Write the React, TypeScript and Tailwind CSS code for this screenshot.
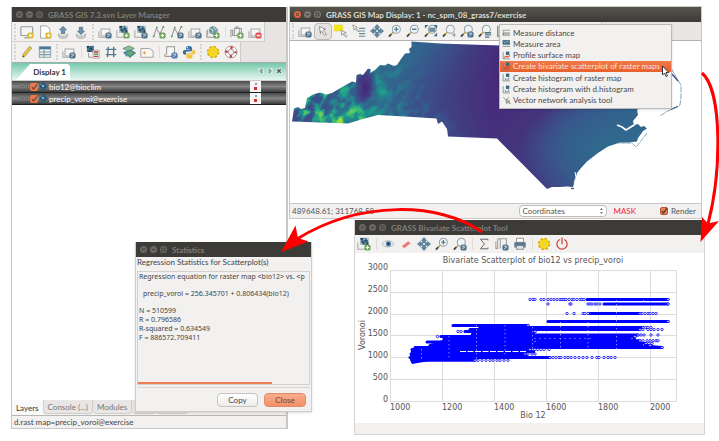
import React from "react";

const UI = "font-['Lato','Noto_Sans',sans-serif]";

/* ---------- icon parts, all on a 16 x 16 grid ---------- */

function Badge({ fill, sign }: { fill: string; sign?: "plus" | "minus" | "pic" }) {
  return (
    <g>
      <rect x="8.5" y="8.5" width="7" height="7" rx="2.2" fill={fill} />
      {sign === "plus" && <path d="M12 10v4M10 12h4" stroke="#fff" strokeWidth="1.4" />}
      {sign === "minus" && <path d="M10 12h4" stroke="#fff" strokeWidth="1.6" />}
      {sign === "pic" && <path d="M10 10.5h4M10.5 13.5l3-2" stroke="#dfe8ee" strokeWidth="1" fill="none" />}
    </g>
  );
}

const GREEN = "#6ca557";
const NAVY = "#4f7188";
const YELLOW = "#e0bc1f";
const RED = "#e0565c";

const Raster = () => (
  <g>
    <path d="M4 1h9v8H4z" fill="#527a92" />
    <path d="M4 1h3v2H4zM9 3h2v2H9zM6 5h2v2H6zM11 6h2v3h-2z" fill="#1f4258" />
    <path d="M7 2h2v1H7zM11 1h2v2h-2zM4 7h2v2H4z" fill="#b9cfda" />
    <path d="M1 6v8h8" fill="none" stroke="#aaa" strokeWidth="1.2" />
  </g>
);

const WindowShape = () => (
  <g fill="none" stroke="#a8a8a8" strokeWidth="1.2">
    <path d="M3.5 4.500h10v8h-10z" fill="#f5f5f5" />
    <path d="M1 7v7h8" />
  </g>
);

const Vector = () => (
  <g fill="none">
    <path d="M2 13L5 4l4 6 4-8" stroke="#8a8a8a" strokeWidth="1.1" />
    <path d="M1 13h2M4.5 3h2M8 10h2M12 2h2" stroke="#5e9a65" strokeWidth="2" />
  </g>
);

const Lens = () => (
  <g>
    <circle cx="9.5" cy="6" r="4.6" fill="#eef3f6" stroke="#98a2a8" strokeWidth="1.2" />
    <path d="M6 9.500L3.500 12" stroke="#b79b3b" strokeWidth="1.600" />
    <path d="M3.800 11.500L1 14.500" stroke="#444" strokeWidth="2" />
  </g>
);

const Cursor = () => <path d="M5 3l7 3-3 1 4 5-2 1-4-5-1 3z" fill="#fff" stroke="#777" strokeWidth="0.9" />;

const glyphs: Record<string, React.ReactNode> = {
  monitor: (
    <g>
      <rect x="1" y="2" width="13.5" height="10" rx="1" fill="#f5f5f5" stroke="#999" strokeWidth="1.3" />
      <path d="M5 14.500h5" stroke="#999" strokeWidth="1.500" />
      <Badge fill={YELLOW} sign="plus" />
    </g>
  ),
  page: (
    <g>
      <path d="M3 1h7l3.500 3.500V15H3z" fill="#fff" stroke="#999" />
      <Badge fill={YELLOW} sign="plus" />
    </g>
  ),
  up: (
    <g>
      <path d="M3 10c0 4 10 4 10 0v3c0 3-10 3-10 0z" fill="#ddd" stroke="#999" strokeWidth="0.8" />
      <path d="M8 1.500L12 5.500H10V10H6V5.500H4z" fill="#6a91a9" stroke="#45697e" strokeWidth="0.7" />
    </g>
  ),
  down: (
    <g>
      <path d="M3 10c0 4 10 4 10 0v3c0 3-10 3-10 0z" fill="#ddd" stroke="#999" strokeWidth="0.8" />
      <path d="M8 11L12 7H10V2.500H6V7H4z" fill="#6a91a9" stroke="#45697e" strokeWidth="0.7" />
    </g>
  ),
  display: <g><WindowShape /><Badge fill={NAVY} sign="pic" /></g>,
  rasterAdd: <g><Raster /><Badge fill={GREEN} sign="plus" /></g>,
  rasterMore: <g><Raster /><Badge fill={NAVY} sign="pic" /></g>,
  vectorAdd: <g><Vector /><Badge fill={GREEN} sign="plus" /></g>,
  vectorMore: <g><Vector /><Badge fill={NAVY} sign="pic" /></g>,
  web: (
    <g>
      <path d="M2 12V5M13 10V4" stroke="#999" />
      <circle cx="8" cy="6" r="4.5" fill="#6b91a4" />
      <path d="M5 4l3 2-1 3M9 2l2 4" stroke="#bcd8c2" strokeWidth="1.3" fill="none" />
      <path d="M1 6v8h8" fill="none" stroke="#999" strokeWidth="1.2" />
      <Badge fill={GREEN} sign="plus" />
    </g>
  ),
  group: (
    <g>
      <path d="M1 14V6h2v6h7M5 11V4l3-2 3 2v7M5 4h8v6" fill="none" stroke="#999" strokeWidth="1.2" />
      <Badge fill={GREEN} sign="plus" />
    </g>
  ),
  remove: <g><WindowShape /><Badge fill={RED} sign="minus" /></g>,
  pencil: (
    <g>
      <path d="M11 1.500l2.500 2-7.500 9-3 1.500.500-3.500z" fill="#e5c94c" stroke="#94802c" strokeWidth="0.7" />
      <path d="M3 14l1-2 1 1z" fill="#333" />
    </g>
  ),
  table: (
    <g>
      <rect x="1.5" y="2" width="13" height="12" fill="#f2f5f7" stroke="#7f98a6" />
      <path d="M1.500 2h13v3h-13z" fill="#4a7b96" />
      <path d="M2 8h12M2 11h12M7 5v9" stroke="#7f98a6" strokeWidth="1.2" />
    </g>
  ),
  legend: (
    <g>
      <path d="M1 1h8v7H1z" fill="#44708a" />
      <path d="M1 1h2v2H1zM5 3h2v2H5zM3 6h2v2H3z" fill="#16394f" />
      <path d="M3 9v5h4" fill="none" stroke="#888" />
      <path d="M8 6h7v9H8z" fill="#fff" stroke="#888" strokeWidth="0.8" />
      <path d="M9 8h5" stroke="#cb3d3d" strokeWidth="1.8" />
      <path d="M9 10.500h5" stroke="#55a45f" strokeWidth="1.8" />
      <path d="M9 13h5" stroke="#cb3d3d" strokeWidth="1.5" />
    </g>
  ),
  grid: <path d="M5 2l-1 12M11 2v12M2 5h12M2 11h12" stroke="#557a8f" strokeWidth="1.6" />,
  overlay: (
    <g>
      <path d="M1 4l7-3 6 3-6 3z" fill="#8fbd9a" stroke="#4e8a55" strokeWidth="0.9" />
      <path d="M4 8l6-2 5 3-6 5z" fill="#67a875" stroke="#3b7f94" strokeWidth="1.3" />
      <path d="M2 8l4 5" stroke="#3b7f94" strokeWidth="1.6" />
    </g>
  ),
  label: (
    <g>
      <path d="M1 4h10l4 3v7H1z" fill="#fbf8f2" stroke="#999" />
      <path d="M3 9h4M5 7v4" stroke="#d89a58" />
    </g>
  ),
  script: (
    <g>
      <path d="M3 2h9v11H2c-2 0-1-3 1-3z" fill="#f7f7f7" stroke="#999" strokeWidth="1.2" />
      <Badge fill="#5377a8" sign="pic" />
    </g>
  ),
  python: (
    <g>
      <path d="M8 1c-3 0-3.500 1-3.500 3v1H9v.800H3C1.500 5.800 1 7 1 8.500S2 11 3 11h1.500V9c0-1 1-1.500 2-1.500h3c1.200 0 2-.800 2-2V4c0-2-1-3-3.500-3z" fill="#38719f" />
      <path d="M8.500 15.500c3 0 3.500-1 3.500-3v-1H7.500v-.800H13c1.500 0 2.300-1 2.300-2.500S14.500 5.500 13 5.500h-1v2c0 1-1 1.500-2 1.500H7c-1.200 0-2 .800-2 2v1.500c0 2 1 3 3.500 3z" fill="#f2c237" />
      <circle cx="6.3" cy="3" r="0.7" fill="#fff" />
    </g>
  ),
  gear: (
    <g>
      <circle cx="8" cy="8" r="6" fill="none" stroke="#d2ab00" strokeWidth="2.2" strokeDasharray="2.7 2" />
      <circle cx="8" cy="8" r="5.6" fill="#f6d91f" stroke="#dfba12" strokeWidth="0.8" />
      <circle cx="8" cy="8" r="1.5" fill="#fff3ac" stroke="#d2ab00" strokeWidth="0.6" />
    </g>
  ),
  ring: (
    <g fill="none">
      <circle cx="8" cy="8" r="5" stroke="#fafafa" strokeWidth="3.4" />
      <circle cx="8" cy="8" r="5" stroke="#c9403a" strokeWidth="3.2" strokeDasharray="2.8 5.05" strokeDashoffset="1.4" />
      <circle cx="8" cy="8" r="6.8" stroke="#8d7a78" strokeWidth="0.8" />
      <circle cx="8" cy="8" r="3.2" stroke="#8d7a78" strokeWidth="0.8" />
    </g>
  ),
  pointer: <g transform="translate(-1 0)"><Cursor /></g>,
  select: (
    <g>
      <path d="M0 1h10v7H0z" fill="#f5e61c" stroke="#cdbb3f" strokeWidth="0.7" strokeDasharray="1 1" />
      <path d="M8 7l6 3-3 .500 4 3.500-1.500 1-3.500-4-1 2z" fill="#fff" stroke="#888" strokeWidth="0.9" />
    </g>
  ),
  query: (
    <g>
      <path d="M1 1l5 3-2 .500 4 3.500-1 1-3.500-3.500-1 1.500z" fill="#fff" stroke="#888" strokeWidth="0.9" />
      <path d="M8 5h7M8 8h7M8 11h7M8 14h7" stroke="#6d8d9f" strokeWidth="1.3" />
    </g>
  ),
  pan: (
    <g fill="#5d89a4" stroke="#3d647b" strokeWidth="0.6">
      <path d="M8 .5L11 4H9.500v2.500h-3V4H5z" />
      <path d="M8 15.500L5 12h1.500V9.500h3V12H11z" />
      <path d="M.5 8L4 5v1.500h2.500v3H4V11z" />
      <path d="M15.500 8L12 11V9.500H9.500v-3H12V5z" />
    </g>
  ),
  zoomIn: <g><Lens /><path d="M9.500 3.500v5M7 6h5" stroke="#42708a" strokeWidth="1.3" /></g>,
  zoomOut: <g><Lens /><path d="M7 6h5" stroke="#42708a" strokeWidth="1.5" /></g>,
  zoomAll: (
    <g>
      <Lens />
      <path d="M1 1h4L1 5zM15 1h-4l4 4zM15 14h-4l4-4z" fill="#3c6a84" />
      <path d="M6 4h7v5H6z" fill="#6b8ea2" />
    </g>
  ),
  zoomRegion: <g><Lens /><path d="M14 10v5M11.500 12.500h4" stroke="#888" /></g>,
  zoomBack: <g><Lens /><Badge fill={NAVY} sign="pic" /></g>,
  zoomMenu: <g><Lens /><path d="M8 10h7M8 12.500h7M8 15h5" stroke={NAVY} strokeWidth="1.5" /></g>,
  analyze: (
    <g>
      <path d="M2 2v12h12" fill="none" stroke="#777" strokeWidth="1.3" />
      <path d="M7 1h6v6H7z" fill="#3d687f" />
      <path d="M4 12l3-3 3 2 4-3" fill="none" stroke="#d4422f" strokeWidth="1.8" />
    </g>
  ),
  histogram: (
    <g>
      <path d="M2 2v12h12" fill="none" stroke="#777" strokeWidth="1.3" />
      <path d="M7 1h6v6H7z" fill="#3d687f" />
      <path d="M5 13V9h2v4M8 13v-3h2v3M11 13V8h2v5" fill="#7d9cac" />
    </g>
  ),
  distance: (
    <g fill="none">
      <path d="M2 4h12M2 4v3" stroke="#777" strokeWidth="1.2" />
      <path d="M2 9h12M2 12.500h12M2 8v5" stroke="#555" strokeWidth="1.4" />
    </g>
  ),
  area: (
    <g>
      <path d="M1 2h13v8H1z" fill="#3d687f" />
      <path d="M3 5l3 2 3-3 3 2" stroke="#cfe0e8" strokeWidth="1.2" fill="none" />
      <path d="M1 13h13" stroke="#777" strokeWidth="1.4" />
    </g>
  ),
  network: (
    <g>
      <path d="M2 2l5 5 6-5M7 7l1 7" fill="none" stroke="#777" strokeWidth="1.2" />
      <path d="M8 6l6 3-3 .500 4 3.500-1.500 1.500-3.500-4-1 2z" fill="#e9d48a" stroke="#666" strokeWidth="0.9" />
    </g>
  ),
  eye: (
    <g>
      <path d="M1 8c3-5 11-5 14 0-3 4.500-11 4.500-14 0z" fill="#e8edf1" stroke="#a3adb3" strokeWidth="0.9" />
      <circle cx="8.5" cy="7.8" r="2.9" fill="#4a7da6" />
      <circle cx="8.5" cy="7.8" r="1.2" fill="#12283a" />
    </g>
  ),
  eraser: <path d="M3.500 10.500l7-5.500 2.500 2-7 5.500z" fill="#e8736f" stroke="#f0a09b" strokeWidth="0.8" />,
  sigma: <path d="M12.500 4V2.500H4l4.500 5.500L4 13.500h8.500V12" fill="none" stroke="#666" strokeWidth="1.1" />,
  save: (
    <g>
      <path d="M3 2h10v10M3 2v11H1V5M6 2v11" fill="none" stroke="#a0a0a0" strokeWidth="1.2" />
      <Badge fill={NAVY} sign="pic" />
    </g>
  ),
  printer: (
    <g>
      <path d="M4 1.500h8V6H4z" fill="#fff" stroke="#888" />
      <path d="M1.500 6h13v6h-13z" fill="#58798d" />
      <path d="M4 10h8v4H4z" fill="#dfe7ec" stroke="#888" />
    </g>
  ),
  power: (
    <g fill="none" stroke="#cf4743" strokeWidth="1.5" strokeLinecap="round">
      <path d="M5 3.200a5.800 5.800 0 1 0 6 0" />
      <path d="M8 1v6.500" />
    </g>
  ),
};

function Icon({ name, className = "size-3.5" }: { name: string; className?: string }) {
  return (
    <svg viewBox="0 0 16 16" className={`${className} shrink-0`} aria-hidden="true">
      {glyphs[name]}
    </svg>
  );
}

function Tools({ names, active }: { names: string[]; active?: string }) {
  return (
    <div className="flex h-full items-center">
      {names.map((name, i) =>
        name === "sep" ? (
          <span key={i} className="flex w-1.5 justify-center">
            <span className="h-3 w-px bg-[#dddcda]" />
          </span>
        ) : (
          <button
            key={i}
            aria-label={name}
            className={`flex h-[17px] w-[18px] items-center justify-center ${
              name === active ? "rounded-sm border border-[#bdbbb8] bg-[#e4e3e1]" : ""
            }`}
          >
            <Icon name={name} />
          </button>
        ),
      )}
    </div>
  );
}

function Handle() {
  return (
    <span className="flex h-full w-1.5 items-center justify-center">
      <span className="h-4 border-l-2 border-dotted border-[#d6d4d1]" />
    </span>
  );
}

function TitleBar({ title, live = false }: { title: string; live?: boolean }) {
  return (
    <header
      className={`flex h-[15px] items-center gap-[3px] px-1 text-[8px] leading-none font-bold ${
        live ? "bg-linear-to-b from-[#57554c] to-[#3b3a36] text-[#dfdbd2]" : "bg-[#3c3b37] text-[#807d77]"
      }`}
    >
      {["M2 2l3 3M5 2L2 5", "M2 3.500h3", "M2 2h3v3H2z"].map((d, i) => (
        <button key={i} aria-label={["Close", "Minimize", "Maximize"][i]} className="shrink-0">
          <svg viewBox="0 0 7 7" className="size-[7px]">
            <circle cx="3.5" cy="3.5" r="3.5" fill={live ? (i === 0 ? "#e9653a" : "#7b7970") : "#6a6862"} />
            <path d={d} stroke="#3c3b37" strokeWidth="0.9" fill="none" />
          </svg>
        </button>
      ))}
      <h2 className="ml-[2px] whitespace-nowrap">{title}</h2>
    </header>
  );
}

/* ---------- layer manager ---------- */

function LayerRow({ name }: { name: string }) {
  return (
    <li className="flex h-3 items-center border-b border-[#222] bg-linear-to-b from-[#4a4a4a] via-[#868686] to-[#3d3d3d] text-[8px] leading-none text-white">
      <span className="ml-[7px] w-[11px] border-t border-dotted border-[#555]" />
      <label className="flex flex-1 items-center gap-px">
        <span className="relative flex size-2 shrink-0">
          <input type="checkbox" defaultChecked className="size-2 appearance-none rounded-[2px] bg-[#ee7648]" />
          <svg viewBox="0 0 8 8" className="pointer-events-none absolute inset-0 size-2" aria-hidden="true">
            <path d="M2 4l1.500 2L7 1.500" fill="none" stroke="#543" strokeWidth="1.1" />
          </svg>
        </span>
        <svg viewBox="0 0 9 9" className="size-[9px] shrink-0" aria-hidden="true">
          <path d="M3 .5h3v2h2.500v3.500H6.500v2.500H3V6.500H.5V3H3z" fill="#2f5a78" />
          <path d="M3 3h2v2H3z" fill="#8fb4ca" />
        </svg>
        <span>{name}</span>
      </label>
      <button aria-label={`Options for ${name}`} className="mr-[25px] flex h-full w-[11px] flex-col items-center justify-center gap-[2px] bg-[#f6f6f6]">
        <span className="size-[2px] bg-[#999]" />
        <span className="size-[3px] bg-[#c33]" />
      </button>
    </li>
  );
}

function LayerManager() {
  return (
    <section className="absolute top-[7px] left-[11px] flex h-[422px] w-[277px] flex-col border-r-2 border-b border-l border-[#cac8c5] bg-[#f2f1f0]">
      <TitleBar title="GRASS GIS 7.3.svn Layer Manager" />
      <div className="flex bg-[#e6e5e4]">
        <div className="flex h-5 items-center border-r border-b border-[#d0cecb] bg-[#f2f1f0]">
          <Handle />
          <Tools names={["monitor", "page", "up", "down"]} />
          <Handle />
          <Tools names={["display", "rasterAdd", "rasterMore", "vectorAdd", "vectorMore", "display", "web", "sep", "group", "remove"]} />
        </div>
      </div>
      <div className="flex bg-[#e6e5e4]">
        <div className="flex h-5 items-center border-r border-[#d0cecb] bg-[#f2f1f0]">
          <Handle />
          <Tools names={["pencil", "table"]} />
          <Handle />
          <Tools names={["display", "sep", "legend", "grid", "overlay", "label", "sep", "script", "python"]} />
          <Handle />
          <Tools names={["gear", "ring"]} />
        </div>
      </div>
      <div className="flex h-[18px] items-end justify-between border-t border-[#aaa] bg-linear-to-b from-[#74c9ac] to-[#e6f6f0] pr-1">
        <button className="ml-1 flex h-4 w-[54px] items-center justify-end bg-white pr-1 text-[8px] font-bold whitespace-nowrap text-[#333] [clip-path:polygon(14px_0,52px_0,100%_2px,100%_100%,0_100%)]">
          Display 1
        </button>
        <div className="mb-[6px] flex gap-[3px] text-[#555]">
          {["M4.500 1v5L2 3.500z", "M2.500 1v5L5 3.500z", "M1.500 1.500l4 4M5.500 1.500l-4 4"].map((d, i) => (
            <button key={i} aria-label={["Previous", "Next", "Close tab"][i]} className="bg-[#c8eade]">
              <svg viewBox="0 0 7 7" className="size-[6px]">
                <path d={d} fill="none" stroke="currentColor" strokeWidth={i === 2 ? "1.4" : "0.8"} />
              </svg>
            </button>
          ))}
        </div>
      </div>
      <ul className="flex-1 border-t border-[#ccc] bg-white">
        <LayerRow name="bio12@bioclim" />
        <LayerRow name="precip_voroi@exercise" />
      </ul>
      <nav className="flex h-4 border-b border-[#b9b7b4] bg-[#f2f1f0] text-[8px] leading-none text-[#777]">
        <button className="bg-white/60 px-1 text-[#333]">Layers</button>
        <button className="mb-px rounded-b border-r border-b border-l border-[#cfcdca] bg-[#e8e7e5] px-1">Console (...)</button>
        <button className="mb-px rounded-b border-r border-b border-[#cfcdca] bg-[#e8e7e5] px-1">Modules</button>
        <button className="mb-px w-6 overflow-hidden rounded-b border-r border-b border-[#cfcdca] bg-[#e8e7e5] px-1 text-left">Data</button>
        <button className="mb-px w-8 overflow-hidden rounded-b border-r border-b border-[#cfcdca] bg-[#e8e7e5] px-1 text-left">Python</button>
      </nav>
      <footer className="flex h-3 items-center px-[2px] text-[8px] leading-none text-[#444]">d.rast map=precip_voroi@exercise</footer>
    </section>
  );
}

/* ---------- map display ---------- */

const STATE =
  "M292 121.500L294 108.500 298 107 301 109 305 108 307 98 313 94.500 320 92.500 326 94.500 332 93 343 86.500 352 81.500 356 82.500 356.500 75 360 74 363 75 368 68.500 371 69.500 370 73 375 70 380 65 385 65.500 388 63.500 394 66 397 65 401 59 405 53.500 410 53 409 49 411.500 47 411.500 41.500 440 43.500 500 45.500 600 46.500 668 48 672 60 671 90 655 105 641 107 637 110 638 115 633 121 634 125 638 124 641 127 644 126 647 128.500 643 131 641 134 638 138 637 141.500 628 142.500 620 142.500 608 146.500 598 153 587 161.500 581 168 577 173 575 180 573 187 567 186.500 560 187 552 187 547 189 497 138.500 448 136.500 447 129 442 121.500 438 124 436.500 118.500 405 116.500 378 115 363 119 348 123.500Z";

/* purple-blue-green-yellow colour ramp of the raster */
const RAMP_R = "0.267 0.282 0.243 0.192 0.149 0.122 0.208 0.431 0.710 0.992";
const RAMP_G = "0.004 0.157 0.290 0.408 0.510 0.620 0.718 0.808 0.871 0.906";
const RAMP_B = "0.329 0.471 0.537 0.557 0.557 0.537 0.475 0.345 0.169 0.145";

function StateMap() {
  return (
    <svg viewBox="290 41 411 162" className="block w-full" role="img" aria-label="Raster map">
      <defs>
        <filter id="ramp" x="0" y="0" width="1" height="1" colorInterpolationFilters="sRGB">
          <feComponentTransfer>
            <feFuncR type="table" tableValues={RAMP_R} />
            <feFuncG type="table" tableValues={RAMP_G} />
            <feFuncB type="table" tableValues={RAMP_B} />
          </feComponentTransfer>
        </filter>
        <filter id="ridges" x="0" y="0" width="1" height="1" colorInterpolationFilters="sRGB">
          <feTurbulence type="fractalNoise" baseFrequency="0.090 0.130" numOctaves={5} seed={11} />
          <feColorMatrix values="3 0 0 0 -1.250  3 0 0 0 -1.250  3 0 0 0 -1.250  0 0 0 0 1" />
        </filter>
        <linearGradient id="base" gradientUnits="userSpaceOnUse" x1="292" y1="115" x2="690" y2="150">
          <stop offset="0" stopColor="#787878" />
          <stop offset="0.2" stopColor="#686868" />
          <stop offset="0.3" stopColor="#525252" />
          <stop offset="0.4" stopColor="#3c3c3c" />
          <stop offset="0.5" stopColor="#252525" />
          <stop offset="0.62" stopColor="#2b2b2b" />
          <stop offset="0.78" stopColor="#484848" />
          <stop offset="0.9" stopColor="#585858" />
        </linearGradient>
        <radialGradient id="dark">
          <stop offset="0" stopColor="#191919" />
          <stop offset="0.5" stopColor="#1c1c1c" stopOpacity="0.7" />
          <stop offset="1" stopColor="#1c1c1c" stopOpacity="0" />
        </radialGradient>
        <radialGradient id="bright">
          <stop offset="0" stopColor="#d8d8d8" />
          <stop offset="0.5" stopColor="#bcbcbc" stopOpacity="0.7" />
          <stop offset="1" stopColor="#a0a0a0" stopOpacity="0" />
        </radialGradient>
        <radialGradient id="coast">
          <stop offset="0" stopColor="#585858" />
          <stop offset="0.5" stopColor="#545454" stopOpacity="0.7" />
          <stop offset="1" stopColor="#545454" stopOpacity="0" />
        </radialGradient>
        <linearGradient id="westFade" gradientUnits="userSpaceOnUse" x1="335" y1="122" x2="425" y2="65">
          <stop offset="0" stopColor="#fff" />
          <stop offset="0.3" stopColor="#888" />
          <stop offset="0.6" stopColor="#444" />
          <stop offset="1" stopColor="#000" />
        </linearGradient>
        <mask id="west" maskUnits="userSpaceOnUse" x="290" y="41" width="411" height="162">
          <rect x="290" y="41" width="411" height="162" fill="url(#westFade)" />
        </mask>
        <clipPath id="state">
          <path d={STATE} />
        </clipPath>
      </defs>
      <rect x="290" y="41" width="411" height="162" fill="#fff" />
      <g clipPath="url(#state)">
        <g filter="url(#ramp)">
          <rect x="290" y="41" width="411" height="162" fill="url(#base)" />
          <ellipse cx="485" cy="95" rx="95" ry="60" fill="url(#dark)" opacity="0.5" />
          <ellipse cx="540" cy="55" rx="90" ry="40" fill="url(#dark)" opacity="0.5" />
          <ellipse cx="610" cy="150" rx="90" ry="55" fill="url(#coast)" />
          <ellipse cx="345" cy="118" rx="38" ry="14" fill="url(#bright)" />
          <ellipse cx="335" cy="102" rx="30" ry="12" fill="url(#bright)" opacity="0.3" />
          <ellipse cx="381" cy="92" rx="7" ry="18" fill="url(#bright)" opacity="0.4" />
          <ellipse cx="372" cy="112" rx="16" ry="7" fill="url(#bright)" opacity="0.6" />
          <g mask="url(#west)">
            <rect x="260" y="-20" width="240" height="220" filter="url(#ridges)" opacity="0.5" transform="rotate(-35 350 100)" />
          </g>
          <ellipse cx="365" cy="86" rx="12" ry="24" fill="url(#dark)" />
        </g>
        <path d="M640 120l-6 5-8 5-4-3-5-2" fill="none" stroke="#fff" strokeWidth="1.6" />
        <path d="M575 172l1 5-2 6" fill="none" stroke="#fff" />
      </g>
      <g fill="none" stroke="#31688e" strokeWidth="0.6">
        <path d="M671 68l5 9 5 8v12l-1 8-4 2-10 5-6 4" strokeDasharray="6 1" />
        <path d="M672 74l6 7" stroke="#3e4a89" strokeWidth="1.2" />
        <path d="M647 133l-6 8-5 6-4-4-14 0" strokeDasharray="5 1" />
        <path d="M671 109.500l7-3" strokeWidth="1.2" />
        <path d="M571 188.500h3" strokeWidth="1.4" />
      </g>
    </svg>
  );
}

function MapDisplay() {
  return (
    <section className="absolute top-[6px] left-[289px] w-[413px] border border-[#cac8c5] bg-[#f2f1f0]">
      <TitleBar live title="GRASS GIS Map Display: 1 - nc_spm_08_grass7/exercise" />
      <div className="flex h-[19px] border-b border-[#b5b3b0] bg-[#e8e7e6]">
        <div className="flex w-[312px] items-center border-r border-[#d0cecb] bg-[#f2f1f0]">
          <Handle />
          <Tools
            active="pointer"
            names={["display", "pointer", "select", "query", "pan", "zoomIn", "zoomOut", "zoomAll", "zoomRegion", "zoomBack", "zoomMenu", "analyze"]}
          />
        </div>
      </div>
      <StateMap />
      <footer className="flex h-[15px] items-center border-t border-[#cac8c5] px-[2px] text-[8px] leading-none text-[#555]">
        <span className="flex-1">489648.61; 311768.58</span>
        <span className="relative mr-[6px] flex">
          <select aria-label="Status bar mode" className="h-3 w-[88px] appearance-none rounded-sm border border-[#c0beba] bg-white px-[2px] text-[8px] leading-none text-[#555]">
            <option>Coordinates</option>
          </select>
          <svg viewBox="0 0 5 8" className="pointer-events-none absolute top-[2px] right-[3px] h-2 w-[5px]" aria-hidden="true">
            <path d="M1 3l1.500-2L4 3zM1 5l1.500 2L4 5z" fill="#777" />
          </svg>
        </span>
        <span className="mr-6 text-[#ee2233]">MASK</span>
        <label className="mr-[3px] flex items-center gap-[3px]">
          <span className="relative flex size-2">
            <input type="checkbox" defaultChecked className="size-2 appearance-none rounded-[2px] border border-[#b0563a] bg-[#ea7d55]" />
            <svg viewBox="0 0 8 8" className="pointer-events-none absolute inset-0 size-2" aria-hidden="true">
              <path d="M2 4l1.500 2L7 1" fill="none" stroke="#432" strokeWidth="1.2" />
            </svg>
          </span>
          Render
        </label>
      </footer>
    </section>
  );
}

const MENU = [
  ["distance", "Measure distance"],
  ["area", "Measure area"],
  ["analyze", "Profile surface map"],
  ["analyze", "Create bivariate scatterplot of raster maps"],
  ["histogram", "Create histogram of raster map"],
  ["histogram", "Create histogram with d.histogram"],
  ["network", "Vector network analysis tool"],
];

function AnalyzeMenu() {
  return (
    <div role="menu" className="absolute top-[24px] left-[499px] flex h-[85px] w-[173px] flex-col border border-[#bcbab7] bg-[#f2f1f0] py-[2px] text-[8px] leading-none text-[#4a4a4a] shadow-sm">
      {MENU.map(([icon, text], i) => (
        <button
          role="menuitem"
          key={text}
          className={`flex flex-1 items-center gap-[2px] pl-[2px] whitespace-nowrap ${
            i === 3 ? "bg-linear-to-b from-[#f0794a] to-[#e8602c] text-[#fbe3d8]" : ""
          }`}
        >
          <Icon name={icon} className="size-[9px]" />
          {text}
        </button>
      ))}
    </div>
  );
}

/* ---------- scatterplot ---------- */

/* each band: y, start and end of the solid run, then single points */
const BANDS: [number, number, number, number[]][] = [
  [299.5, 587, 668, [530, 533, 535, 541, 544, 548, 551, 554, 557, 560, 562, 564, 566, 569, 572, 574, 577, 580, 582, 584]],
  [304, 604, 668, [548, 570, 571, 588, 590, 592, 595, 597, 600]],
  [313.5, 590, 640, [567, 574, 583, 585, 588, 642, 645, 648, 650, 653, 656]],
  [321.5, 548, 668, []],
  [325.5, 453, 528, []],
  [327.5, 480, 643, [646, 648, 651]],
  [329.5, 470, 640, [643, 648, 651, 654, 658, 662]],
  [331.5, 465, 535, [458, 461]],
  [335, 478, 638, [641, 644, 651, 658]],
  [336.5, 441, 635, [437.5]],
  [339, 444, 632, []],
  [340.7, 448, 640, [643, 647, 650, 653, 656, 658]],
  [342, 427, 535, []],
  [343.5, 440, 646, [649, 652]],
  [345.5, 430, 650, []],
  [347.5, 415, 662, []],
  [349.5, 412, 530, [533, 535, 538, 541, 544, 549]],
  [354, 411, 525, [528, 532, 535]],
  [357.5, 410, 550, [553, 556, 559, 561, 565, 568, 571, 575, 579, 583, 587, 592, 597, 599, 604, 608, 611, 615]],
  [360.3, 414, 475, [478, 482, 486, 490, 493, 497, 500, 504, 508]],
];

const BODY = [
  "M411 350l4-3h13l2-3 10-3 6-2 24-3 4-8h61v25H460l-2 3-46 8-2-4z",
  "M480 326h50l4 2h104v3H534l-4 3h104l4 10 24 2v2H478z",
  "M410 356l3-6 48-1v3h64l5 6-118 2z",
];

function Chart() {
  return (
    <svg
      viewBox="355 253 349 170"
      className="block w-full bg-white font-['DejaVu_Sans',sans-serif] text-[8px]"
      role="img"
      aria-label="Bivariate Scatterplot of bio12 vs precip_voroi"
      fill="#555"
    >
      <g stroke="#dcdcdc" fill="none" shapeRendering="crispEdges">
        {[390, 442, 494, 546, 598, 650, 676].map((x) => (
          <path key={x} d={`M${x + 0.5} 270V402`} />
        ))}
        {[270, 292, 314, 335, 357, 379, 401].map((y) => (
          <path key={y} d={`M390 ${y + 0.5}H677`} />
        ))}
      </g>
      <text x="533" y="263" textAnchor="middle">Bivariate Scatterplot of bio12 vs precip_voroi</text>
      {[3000, 2500, 2000, 1500, 1000, 500, 0].map((v, i) => (
        <text key={v} x="388" y={270 + i * 22} textAnchor="end">
          {v}
        </text>
      ))}
      {[1000, 1200, 1400, 1600, 1800, 2000].map((v, i) => (
        <text key={v} x={390 + i * 52} y="410">
          {v}
        </text>
      ))}
      <text x="533" y="418" textAnchor="middle">Bio 12</text>
      <text transform="translate(365 335) rotate(-90)" textAnchor="middle">Voronoi</text>
      {BODY.map((d) => (
        <path key={d} d={d} fill="#00f" />
      ))}
      <g stroke="#00f">
        {BANDS.map(([y, x0, x1, dots]) => (
          <g key={y}>
            <path d={`M${x0} ${y}H${x1}`} strokeWidth="3" strokeLinecap="round" />
            {dots.map((x) => (
              <circle key={x} cx={x} cy={y} r="1.2" fill="#fff" strokeWidth="0.8" />
            ))}
            <circle cx={x1} cy={y} r="1.2" fill="#dde" strokeWidth="0.8" />
          </g>
        ))}
      </g>
      <g stroke="#aab2ff" strokeWidth="0.8" strokeDasharray="1.4 2.6" fill="none">
        <path d="M421.500 349v11M449 336v24M476.500 325v36M505 325v30M532.500 327v22M560.500 322v27M588 322v27M616.500 300v49M643.500 300v4M643.500 336v12" />
        <path d="M534 338.500h60" strokeDasharray="2 3" strokeWidth="0.5" />
      </g>
      <path d="M460 351.500h66" stroke="#fff" strokeWidth="1" strokeDasharray="6 1.5" />
    </svg>
  );
}

function ScatterTool() {
  return (
    <section className="absolute top-[220px] left-[354px] w-[351px] border-x border-b border-[#d6d4d1] bg-[#f2f1f0]">
      <TitleBar title="GRASS Bivariate Scatterplot Tool" />
      <div className="flex h-[18px] items-center">
        <Tools names={["rasterAdd", "sep", "eye", "eraser", "pan", "zoomIn", "zoomBack", "sep", "sigma", "save", "printer", "sep", "gear", "power"]} />
      </div>
      <Chart />
      <footer className="h-[11px]" />
    </section>
  );
}

/* ---------- statistics dialog ---------- */

function StatisticsDialog() {
  return (
    <section role="dialog" aria-label="Statistics" className="absolute top-[242px] left-[135px] flex h-[170px] w-[177px] flex-col border border-t-0 border-[#d0cecb] bg-[#f2f1f0] text-[8px] leading-none text-[#444] shadow-sm">
      <TitleBar title="Statistics" />
      <h3 className="px-px leading-[10px]">Regression Statistics for Scatterplot(s)</h3>
      <div className="mx-px mt-1 h-[114px] overflow-hidden border border-[#d3d1ce]">
        <pre className="h-[110px] px-px font-['Noto_Sans',sans-serif] text-[7px] leading-[9px]">
          <span className="block">{"Regression equation for raster map <bio12> vs. <p"}</span>
          <span className="block py-2 pl-1">precip_voroi = 256.345701 + 0.806434(bio12)</span>
          <span className="block">N = 510599</span>
          <span className="block">R = 0.796586</span>
          <span className="block">R-squared = 0.634549</span>
          <span className="block">F = 886572.709411</span>
        </pre>
        <div className="h-[2px] w-[134px] bg-[#ee7f55]" />
      </div>
      <div className="mx-px mt-[2px] flex flex-1 items-center justify-end gap-[6px] border-t border-[#d8d6d3] pr-1">
        <button className="h-[14px] w-[41px] rounded-sm border border-[#c6c4c0] bg-linear-to-b from-white to-[#eeedeb] text-[#444]">Copy</button>
        <button className="h-[14px] w-[42px] rounded-sm border border-[#e08a68] bg-linear-to-b from-[#fbab8a] to-[#f58f68] text-[#5b4a44]">Close</button>
      </div>
    </section>
  );
}

export default function App() {
  return (
    <main className={`relative min-h-screen overflow-hidden bg-white ${UI}`}>
      <LayerManager />
      <MapDisplay />
      <AnalyzeMenu />
      <ScatterTool />
      <StatisticsDialog />
      <svg viewBox="0 0 719 441" className="pointer-events-none absolute top-0 left-0 h-[441px] w-[719px]" aria-hidden="true">
        <path d="M482 232C440 202 360 200 297 239" fill="none" stroke="#f00" strokeWidth="3" />
        <path d="M281 252L295.500 225.500 298 238 308.500 241.500z" fill="#f00" />
        <path d="M702 73C722 90 722 170 708 224" fill="none" stroke="#f00" strokeWidth="3" />
        <path d="M700.500 242L702 217 708 223.500 719 221z" fill="#f00" />
        <path d="M662.500 66v9l2-2 1.500 3.500 1.500-.700-1.500-3.300h2.800z" fill="#fff" stroke="#222" strokeWidth="0.9" />
      </svg>
    </main>
  );
}
